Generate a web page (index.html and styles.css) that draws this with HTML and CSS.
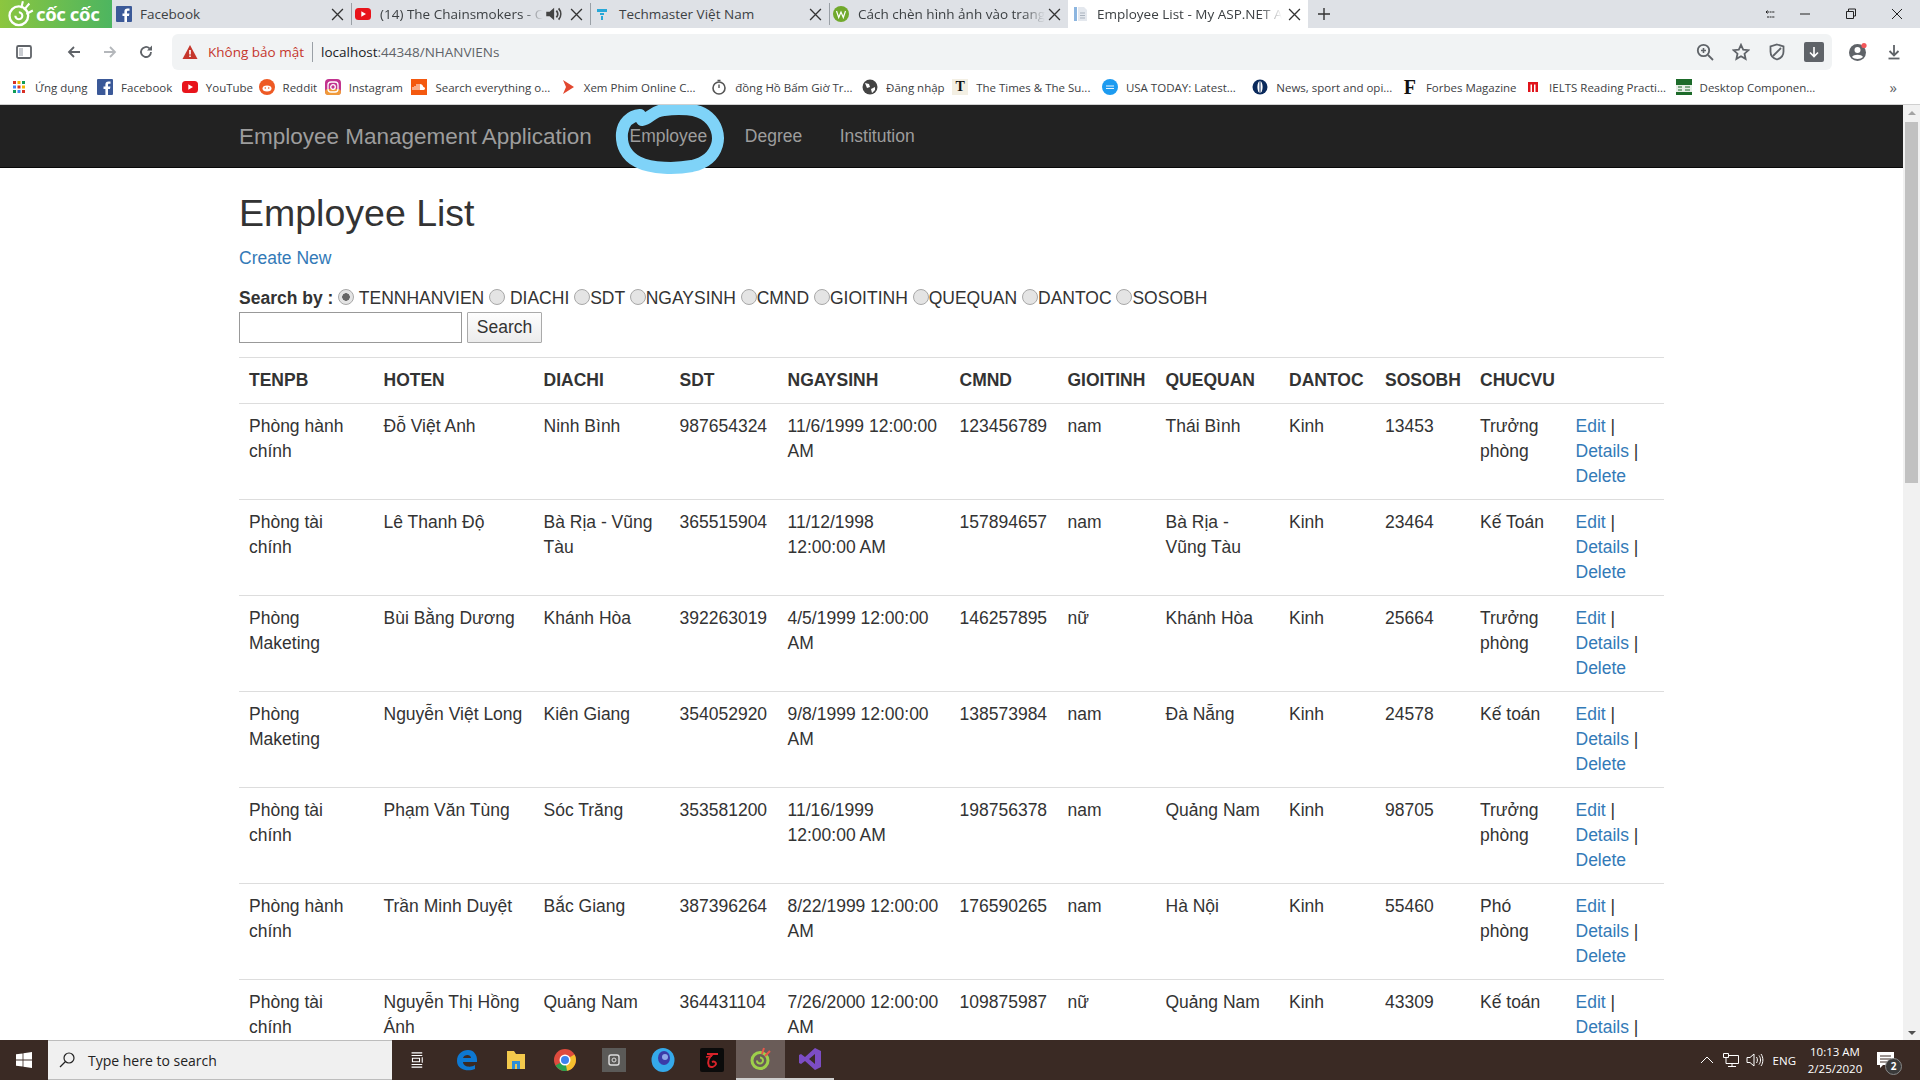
FILE: index.html
```html
<!DOCTYPE html>
<html lang="vi">
<head>
<meta charset="utf-8">
<title>Employee List - My ASP.NET Application</title>
<link rel="stylesheet" href="styles.css">
</head>
<body>
<header class="chrome">
  <div class="tabstrip">
    <div class="brandtab">
      <svg class="cc-logo" viewBox="0 0 24 24"><circle cx="11" cy="13.500" r="8" fill="none" stroke="#fff" stroke-width="2"/><path d="M8 13.500a3 3 0 1 0 6 0c0-2-2-3-3-3" fill="none" stroke="#fff" stroke-width="1.800"/><path d="M14.500 1l-1.500 6M20 3l-4.500 5.500M23 9l-5.500 3" stroke="#fff" stroke-width="1.800"/></svg>
      <span class="cc-text">cốc cốc</span>
    </div>
    <div class="tab">
      <svg class="fav" viewBox="0 0 16 16"><rect width="16" height="16" rx="1" fill="#3b5998"/><path d="M11 16V10h2l.4-2.500H11V6c0-.8.3-1.200 1.200-1.200h1.300V2.500h-2c-2 0-3.100 1.200-3.100 3.200v1.800H6.500V10h1.900v6z" fill="#fff"/></svg>
      <span class="tab-title">Facebook</span>
      <svg class="tab-x" viewBox="0 0 12 12"><path d="M1 1l10 10M11 1L1 11"/></svg>
    </div>
    <div class="tab sep">
      <svg class="fav" viewBox="0 0 16 16"><rect y="2" width="16" height="12" rx="3.500" fill="#e8141b"/><path d="M6.300 5.200v5.600L11 8z" fill="#fff"/></svg>
      <span class="tab-title fade">(14) The Chainsmokers - C</span>
      <svg class="tab-sound" viewBox="0 0 16 16"><path d="M2 6h3l4-3.500v11L5 10H2z" fill="#444"/><path d="M11 5c1.500 1.800 1.500 4.200 0 6M13 3c2.500 3 2.500 7 0 10" fill="none" stroke="#444" stroke-width="1.500"/></svg>
      <svg class="tab-x" viewBox="0 0 12 12"><path d="M1 1l10 10M11 1L1 11"/></svg>
    </div>
    <div class="tab sep">
      <svg class="fav" viewBox="0 0 16 16"><path d="M3 3h10v3H3zM6 7h4v2H6zM7 10h2v4H7z" fill="#28a8d8"/></svg>
      <span class="tab-title">Techmaster Việt Nam</span>
      <svg class="tab-x" viewBox="0 0 12 12"><path d="M1 1l10 10M11 1L1 11"/></svg>
    </div>
    <div class="tab sep">
      <svg class="fav" viewBox="0 0 16 16"><circle cx="8" cy="8" r="8" fill="#71a92c"/><path d="M3.500 5l2.200 6.500L8 6l2.300 5.500L12.500 5" fill="none" stroke="#fff" stroke-width="1.200"/></svg>
      <span class="tab-title fade">Cách chèn hình ảnh vào trang</span>
      <svg class="tab-x" viewBox="0 0 12 12"><path d="M1 1l10 10M11 1L1 11"/></svg>
    </div>
    <div class="tab active">
      <svg class="fav" viewBox="0 0 16 16"><path d="M1 1h3v14H1z" fill="#8db6e0"/><path d="M5 1h6l3 3v11H5z" fill="#e4e8ee"/><path d="M7 7h5M7 9.500h5M7 12h5" stroke="#a9b2bd"/></svg>
      <span class="tab-title fade">Employee List - My ASP.NET A</span>
      <svg class="tab-x" viewBox="0 0 12 12"><path d="M1 1l10 10M11 1L1 11"/></svg>
    </div>
    <svg class="newtab" viewBox="0 0 12 12"><path d="M6 0v12M0 6h12"/></svg>
    <div class="winctl">
      <svg class="wc wc-back" viewBox="0 0 12 12"><path d="M2 4h8M1 4l2-2M1 4l2 2M2 9h8" fill="none" stroke="#222" stroke-width="1" stroke-dasharray="2 .6"/></svg>
      <svg class="wc" viewBox="0 0 12 12"><path d="M1 6h10" stroke="#222" stroke-width="1"/></svg>
      <svg class="wc" viewBox="0 0 12 12"><path d="M3.500 3V1h7v7H8.500M1.500 3.500h7v7h-7z" fill="none" stroke="#222" stroke-width="1"/></svg>
      <svg class="wc" viewBox="0 0 12 12"><path d="M1 1l10 10M11 1L1 11" stroke="#222" stroke-width="1"/></svg>
    </div>
  </div>

  <div class="toolbar">
    <svg class="tb tb-side" viewBox="0 0 16 16"><rect x="1" y="2" width="14" height="12" rx="1.500" fill="none" stroke="#5f6368" stroke-width="1.800"/><rect x="3" y="4" width="4" height="8" fill="#c9ccd1"/></svg>
    <svg class="tb tb-back" viewBox="0 0 16 16"><path d="M14 8H3M8 3L3 8l5 5" fill="none" stroke="#5f6368" stroke-width="1.800"/></svg>
    <svg class="tb tb-fwd" viewBox="0 0 16 16"><path d="M2 8h11M8 3l5 5-5 5" fill="none" stroke="#b4b7bb" stroke-width="1.800"/></svg>
    <svg class="tb tb-reload" viewBox="0 0 16 16"><path d="M13 8a5 5 0 1 1-1.500-3.600" fill="none" stroke="#5f6368" stroke-width="1.800"/><path d="M14 1.500v5h-5z" fill="#5f6368"/></svg>
    <div class="omnibox">
      <svg class="warn" viewBox="0 0 16 16"><path d="M8 1l7.500 14H.5z" fill="#c5362c"/><path d="M7.200 6h1.600v4.500H7.200zM7.200 11.500h1.600v1.600H7.200z" fill="#fff"/></svg>
      <span class="insecure">Không bảo mật</span>
      <span class="omni-sep"></span>
      <span class="url">localhost<span class="url-dim">:44348/NHANVIENs</span></span>
      <svg class="om om-zoom" viewBox="0 0 18 18"><circle cx="7.500" cy="7.500" r="5.700" fill="none" stroke="#5f6368" stroke-width="1.800"/><path d="M12 12l5 5" stroke="#5f6368" stroke-width="1.800"/><path d="M7.500 5v5M5 7.500h5" stroke="#5f6368" stroke-width="1.600"/></svg>
      <svg class="om om-star" viewBox="0 0 18 18"><path d="M9 1.800l2.200 4.800 5.200.6-3.900 3.500 1.100 5.200L9 13.300l-4.600 2.600 1.100-5.200-3.900-3.500 5.200-.6z" fill="none" stroke="#5f6368" stroke-width="1.800"/></svg>
      <svg class="om om-shield" viewBox="0 0 18 18"><path d="M9 1.500l6.500 2v5c0 4-3 7-6.500 8-3.500-1-6.500-4-6.500-8v-5z" fill="none" stroke="#5f6368" stroke-width="1.800"/><path d="M5 13L13 5" stroke="#5f6368" stroke-width="1.800"/></svg>
      <span class="dl-btn"><svg viewBox="0 0 12 12" width="12" height="12"><path d="M6 1v9M2 6.500L6 10.500l4-4" fill="none" stroke="#fff" stroke-width="1.600"/></svg></span>
    </div>
    <svg class="tb tb-user" viewBox="0 0 20 20"><circle cx="9.500" cy="10.500" r="8.500" fill="#5f6368"/><circle cx="9.500" cy="8" r="3" fill="#fff"/><path d="M4 15c1.500-3 9.500-3 11 0-2.500 2.500-8.500 2.500-11 0z" fill="#fff"/><circle cx="16" cy="3.500" r="2.600" fill="#f2575a"/></svg>
    <svg class="tb tb-dl" viewBox="0 0 16 16"><path d="M8 1v10M3.500 7L8 11.500 12.500 7" fill="none" stroke="#5f6368" stroke-width="1.800"/><path d="M2.500 14.500h11" stroke="#5f6368" stroke-width="1.800"/></svg>
  </div>

  <nav class="bookmarks">
    <a class="bm"><svg class="bm-i" viewBox="0 0 16 16"><g fill="#d93025"><rect x="2" y="2" width="3" height="3"/></g><rect x="6.500" y="2" width="3" height="3" fill="#f4b400"/><rect x="11" y="2" width="3" height="3" fill="#0f9d58"/><rect x="2" y="6.500" width="3" height="3" fill="#4285f4"/><rect x="6.500" y="6.500" width="3" height="3" fill="#d93025"/><rect x="11" y="6.500" width="3" height="3" fill="#f4b400"/><rect x="2" y="11" width="3" height="3" fill="#0f9d58"/><rect x="6.500" y="11" width="3" height="3" fill="#4285f4"/><rect x="11" y="11" width="3" height="3" fill="#d93025"/></svg>Ứng dụng</a>
    <a class="bm"><svg class="bm-i" viewBox="0 0 16 16"><rect width="16" height="16" rx="1" fill="#3b5998"/><path d="M11 16V10h2l.4-2.500H11V6c0-.8.3-1.200 1.200-1.200h1.300V2.500h-2c-2 0-3.100 1.200-3.100 3.200v1.800H6.500V10h1.900v6z" fill="#fff"/></svg>Facebook</a>
    <a class="bm"><svg class="bm-i" viewBox="0 0 16 16"><rect y="2" width="16" height="12" rx="3.500" fill="#e8141b"/><path d="M6.300 5.200v5.600L11 8z" fill="#fff"/></svg>YouTube</a>
    <a class="bm"><svg class="bm-i" viewBox="0 0 16 16"><circle cx="8" cy="8" r="8" fill="#ee5a24"/><ellipse cx="8" cy="9.500" rx="4.500" ry="3" fill="#fff"/><circle cx="6.300" cy="9" r=".8" fill="#ee5a24"/><circle cx="9.700" cy="9" r=".8" fill="#ee5a24"/></svg>Reddit</a>
    <a class="bm"><svg class="bm-i" viewBox="0 0 16 16"><rect width="16" height="16" rx="4" fill="#c2338f"/><rect x="0" y="10" width="16" height="6" rx="3" fill="#f09a3a"/><rect x="3" y="3" width="10" height="10" rx="3" fill="none" stroke="#fff" stroke-width="1.300"/><circle cx="8" cy="8" r="2.300" fill="none" stroke="#fff" stroke-width="1.300"/></svg>Instagram</a>
    <a class="bm"><svg class="bm-i" viewBox="0 0 16 16"><rect width="16" height="16" fill="#f4590f"/><path d="M2 11V8M4 11V7M6 11V5M8 11V5" stroke="#fff"/><path d="M9 5c3 0 3 3 3.500 3 2 0 2 3 0 3H9z" fill="#fff"/></svg>Search everything o...</a>
    <a class="bm"><svg class="bm-i" viewBox="0 0 16 16"><path d="M3 1l11 7-11 7 3-7z" fill="#e2472f"/></svg>Xem Phim Online C...</a>
    <a class="bm"><svg class="bm-i" viewBox="0 0 16 16"><circle cx="8" cy="9" r="6" fill="#fff" stroke="#555" stroke-width="1.600"/><path d="M8 9V5.500M6.500 1.500h3" stroke="#555" stroke-width="1.400"/></svg>đồng Hồ Bấm Giờ Tr...</a>
    <a class="bm"><svg class="bm-i" viewBox="0 0 16 16"><circle cx="8" cy="8" r="7.500" fill="#444"/><path d="M3 4l4 1 1 3-3 1zM9 10l4-2 0 3-3 3z" fill="#fff"/></svg>Đăng nhập</a>
    <a class="bm"><span class="bm-i bm-t">T</span>The Times &amp; The Su...</a>
    <a class="bm"><svg class="bm-i" viewBox="0 0 16 16"><circle cx="8" cy="8" r="8" fill="#1d9bf0"/><path d="M4 7h8M4 9.500h8" stroke="#fff" stroke-width=".9"/></svg>USA TODAY: Latest...</a>
    <a class="bm"><svg class="bm-i" viewBox="0 0 16 16"><circle cx="8" cy="8" r="7.500" fill="#0a2a5c"/><ellipse cx="8" cy="8" rx="2.600" ry="6" fill="#fff"/><path d="M8 2v12" stroke="#0a2a5c"/></svg>News, sport and opi...</a>
    <a class="bm"><span class="bm-i bm-f">F</span>Forbes Magazine</a>
    <a class="bm"><svg class="bm-i" viewBox="0 0 16 16"><path d="M3 3h10v10h-2.500V5.500H9V13H7V5.500H5.500V13H3z" fill="#e0141b"/></svg>IELTS Reading Practi...</a>
    <a class="bm"><svg class="bm-i" viewBox="0 0 16 16"><rect width="16" height="16" fill="#1d6b2a"/><rect y="6" width="16" height="7" fill="#e8efe8"/><path d="M2 8h4M9 8h5M2 11h4M9 11h5" stroke="#1d6b2a"/></svg>Desktop Componen...</a>
    <span class="bm-more">»</span>
  </nav>
</header>

<div class="viewport">
  <div class="page">
    <div class="navbar">
      <div class="container nav-inner">
        <a class="nav-brand">Employee Management Application</a>
        <a class="nav-link">Employee</a>
        <a class="nav-link">Degree</a>
        <a class="nav-link">Institution</a>
      </div>
    </div>
    <svg class="scribble" viewBox="0 0 112 74"><path d="M28 17C36 16 38 8 50 7C64 5 84 5 94 14C102 21 106 32 103 42C100 52 92 60 78 63C62 66 38 66 24 59C12 53 7 42 8 30C9 20 16 13 26 12" fill="none" stroke="#7fd3f8" stroke-width="12" stroke-linejoin="round" stroke-linecap="round"/></svg>

    <main class="container">
      <h2 class="title">Employee List</h2>
      <p class="create"><a class="link">Create New</a></p>
      <form class="search">
        <div class="search-by"><b>Search by :</b> <input class="radio" type="radio" name="f" checked> TENNHANVIEN <input class="radio" type="radio" name="f"> DIACHI <input class="radio" type="radio" name="f">SDT <input class="radio" type="radio" name="f">NGAYSINH <input class="radio" type="radio" name="f">CMND <input class="radio" type="radio" name="f">GIOITINH <input class="radio" type="radio" name="f">QUEQUAN <input class="radio" type="radio" name="f">DANTOC <input class="radio" type="radio" name="f">SOSOBH</div>
        <div class="search-box"><input class="text" type="text"> <button class="btn" type="button">Search</button></div>
      </form>
      <table class="grid">
        <colgroup><col class="c1"><col class="c2"><col class="c3"><col class="c4"><col class="c5"><col class="c6"><col class="c7"><col class="c8"><col class="c9"><col class="c10"><col class="c11"><col class="c12"></colgroup>
        <thead><tr><th>TENPB</th><th>HOTEN</th><th>DIACHI</th><th>SDT</th><th>NGAYSINH</th><th>CMND</th><th>GIOITINH</th><th>QUEQUAN</th><th>DANTOC</th><th>SOSOBH</th><th>CHUCVU</th><th></th></tr></thead>
        <tbody>
          <tr><td>Phòng hành chính</td><td>Đỗ Việt Anh</td><td>Ninh Bình</td><td>987654324</td><td>11/6/1999 12:00:00 AM</td><td>123456789</td><td>nam</td><td>Thái Bình</td><td>Kinh</td><td>13453</td><td>Trưởng phòng</td><td><a class="link">Edit</a> | <a class="link">Details</a> | <a class="link">Delete</a></td></tr>
          <tr><td>Phòng tài chính</td><td>Lê Thanh Độ</td><td>Bà Rịa - Vũng Tàu</td><td>365515904</td><td>11/12/1998 12:00:00 AM</td><td>157894657</td><td>nam</td><td>Bà Rịa - Vũng Tàu</td><td>Kinh</td><td>23464</td><td>Kế Toán</td><td><a class="link">Edit</a> | <a class="link">Details</a> | <a class="link">Delete</a></td></tr>
          <tr><td>Phòng Maketing</td><td>Bùi Bằng Dương</td><td>Khánh Hòa</td><td>392263019</td><td>4/5/1999 12:00:00 AM</td><td>146257895</td><td>nữ</td><td>Khánh Hòa</td><td>Kinh</td><td>25664</td><td>Trưởng phòng</td><td><a class="link">Edit</a> | <a class="link">Details</a> | <a class="link">Delete</a></td></tr>
          <tr><td>Phòng Maketing</td><td>Nguyễn Việt Long</td><td>Kiên Giang</td><td>354052920</td><td>9/8/1999 12:00:00 AM</td><td>138573984</td><td>nam</td><td>Đà Nẵng</td><td>Kinh</td><td>24578</td><td>Kế toán</td><td><a class="link">Edit</a> | <a class="link">Details</a> | <a class="link">Delete</a></td></tr>
          <tr><td>Phòng tài chính</td><td>Phạm Văn Tùng</td><td>Sóc Trăng</td><td>353581200</td><td>11/16/1999 12:00:00 AM</td><td>198756378</td><td>nam</td><td>Quảng Nam</td><td>Kinh</td><td>98705</td><td>Trưởng phòng</td><td><a class="link">Edit</a> | <a class="link">Details</a> | <a class="link">Delete</a></td></tr>
          <tr><td>Phòng hành chính</td><td>Trần Minh Duyệt</td><td>Bắc Giang</td><td>387396264</td><td>8/22/1999 12:00:00 AM</td><td>176590265</td><td>nam</td><td>Hà Nội</td><td>Kinh</td><td>55460</td><td>Phó phòng</td><td><a class="link">Edit</a> | <a class="link">Details</a> | <a class="link">Delete</a></td></tr>
          <tr><td>Phòng tài chính</td><td>Nguyễn Thị Hồng Ánh</td><td>Quảng Nam</td><td>364431104</td><td>7/26/2000 12:00:00 AM</td><td>109875987</td><td>nữ</td><td>Quảng Nam</td><td>Kinh</td><td>43309</td><td>Kế toán</td><td><a class="link">Edit</a> | <a class="link">Details</a> |</td></tr>
        </tbody>
      </table>
    </main>
  </div>
  <div class="scrollbar">
    <span class="sb-up"></span>
    <span class="sb-thumb"></span>
    <span class="sb-down"></span>
  </div>
</div>

<footer class="taskbar">
  <svg class="win" viewBox="0 0 16 16"><path d="M0 2.300l6.600-.9v6.200H0zM7.400 1.300L16 0v7.600H7.400zM0 8.400h6.600v6.200L0 13.700zM7.400 8.400H16V16l-8.600-1.200z" fill="#fff"/></svg>
  <div class="tsearch">
    <svg class="tsearch-i" viewBox="0 0 16 16"><circle cx="10" cy="6" r="5" fill="none" stroke="#222" stroke-width="1.200"/><path d="M6.500 9.500L1 15" stroke="#222" stroke-width="1.300"/></svg>
    <span>Type here to search</span>
  </div>
  <div class="tapps">
    <span class="tapp tapp-view"><svg viewBox="0 0 18 18" width="16" height="18"><path d="M4 1h12M4 4h12M4 14h12M4 17h12M5 7h8v4H5zM16 6v6" fill="none" stroke="#fff" stroke-width="1.200"/></svg></span>
    <span class="tapp"><svg viewBox="0 0 22 22" width="22" height="22"><path d="M1 12C1 5 6 1 12 1c6 0 9 5 9 10v2H7c0 5 8 6 12 3v4c-7 3-18 1-18-8zm6-3h8c0-4-7-4-8 0z" fill="#0d78d2"/></svg></span>
    <span class="tapp"><svg viewBox="0 0 22 22" width="22" height="22"><path d="M2 2h7l2 3h9v15H2z" fill="#f3c94c"/><rect x="7" y="12" width="8" height="8" fill="#2f8fd8"/><rect x="10" y="15" width="2" height="5" fill="#f3c94c"/></svg></span>
    <span class="tapp"><svg viewBox="0 0 24 24" width="24" height="24"><circle cx="12" cy="12" r="11" fill="#de4b3e"/><path d="M12 12L2.500 17.500A11 11 0 0 0 16 22.300z" fill="#2ba14f"/><path d="M12 12l9.500-5.500A11 11 0 0 1 14 22.800z" fill="#f6c02e"/><circle cx="12" cy="12" r="5.500" fill="#fff"/><circle cx="12" cy="12" r="4" fill="#3d83ef"/></svg></span>
    <span class="tapp"><svg viewBox="0 0 24 24" width="24" height="24"><rect width="24" height="24" fill="#5b5a58"/><rect x="7" y="7" width="10" height="10" rx="2" fill="none" stroke="#ddd" stroke-width="1.400"/><circle cx="12" cy="12" r="2" fill="none" stroke="#ddd"/></svg></span>
    <span class="tapp"><svg viewBox="0 0 24 24" width="24" height="24"><ellipse cx="12" cy="12" rx="11.500" ry="12" fill="#35a9ea"/><ellipse cx="13" cy="10" rx="6" ry="7" fill="#3b3ba8"/><circle cx="14" cy="9" r="3" fill="#8fa8e8"/></svg></span>
    <span class="tapp"><svg viewBox="0 0 24 24" width="24" height="24"><rect width="24" height="24" rx="2" fill="#0b0b0b"/><path d="M7 6h11M13 6c-4 3-6 7-4 12 2 2 6 1 7-2 0-2-2-3-4-2" fill="none" stroke="#d8232a" stroke-width="2"/><path d="M6 9l6-1" stroke="#d8232a" stroke-width="1.500"/></svg></span>
    <span class="tapp tapp-on"><svg viewBox="0 0 24 24" width="24" height="24"><circle cx="11" cy="13.500" r="8" fill="none" stroke="#9ed04b" stroke-width="3"/><path d="M8 13.500a3 3 0 1 0 6 0c0-2-2-3-3-3" fill="none" stroke="#9ed04b" stroke-width="2"/><path d="M15 1l-2 6M21 4l-5 5" stroke="#e8574a" stroke-width="2"/></svg></span>
    <span class="tapp tapp-open"><svg viewBox="0 0 24 24" width="24" height="24"><path d="M17 1l6 3v16l-6 3L7 14l-4 3-2-1V8l2-1 4 3zM17 7l-6 5 6 5z" fill="#7c4dc4"/></svg></span>
  </div>
  <div class="tray">
    <svg class="tr-i tr-up" viewBox="0 0 14 14" width="14" height="14"><path d="M1 10l6-6 6 6" fill="none" stroke="#fff"/></svg>
    <svg class="tr-i tr-net" viewBox="0 0 18 16" width="18" height="16"><path d="M1.500 1.500h5v4h-5zM6.500 3.500h10v8h-10M10 11.500v3M6 14.500h8M4 5.500v6h3" fill="none" stroke="#fff"/></svg>
    <svg class="tr-i tr-vol" viewBox="0 0 18 16" width="18" height="16"><path d="M1 5.500h3L8 2v12L4 10.500H1zM10.500 5c1.200 1.800 1.200 4.200 0 6M13 3.500c2 2.700 2 6.300 0 9M15 2c2.500 3.500 2.500 8.500 0 12" fill="none" stroke="#fff"/></svg>
    <span class="tr-lang">ENG</span>
    <div class="clock"><span>10:13 AM</span><span>2/25/2020</span></div>
    <span class="notif">
      <svg viewBox="0 0 18 16" width="18" height="16"><path d="M0 0h17v13H6l-3 3v-3H0z" fill="#fff"/><path d="M3 4h11M3 7h11M3 10h7" stroke="#3a2a24"/></svg>
      <span class="notif-n">2</span>
    </span>
  </div>
</footer>
</body>
</html>
```

FILE: styles.css
```css
* { box-sizing: border-box; }
html, body { margin: 0; height: 100%; }
body {
  display: flex;
  flex-direction: column;
  height: 100vh;
  overflow: hidden;
  font-family: "Liberation Sans", Arial, sans-serif;
  font-size: 17.5px;
  line-height: 25px;
  color: #333;
  background: #fff;
}

/* browser chrome */
.chrome { flex: none; font-family: "Open Sans", "Noto Sans", sans-serif; }
.tabstrip {
  display: flex;
  align-items: center;
  height: 28px;
  background: #dee1e6;
  font-size: 13.5px;
  color: #3c4043;
}
.brandtab {
  display: flex;
  align-items: center;
  gap: 2px;
  width: 112px;
  height: 100%;
  padding-left: 6px;
  overflow: hidden;
  background: linear-gradient(90deg, #8cc63f, #4db560);
  color: #fff;
}
.cc-logo { flex: none; width: 28px; height: 28px; }
.cc-text { font: 700 18.5px/1 "Noto Sans", sans-serif; letter-spacing: -.4px; white-space: nowrap; }
.tab {
  position: relative;
  display: flex;
  align-items: center;
  width: 239px;
  height: 100%;
  padding: 0 7px 0 4px;
}
.tab.sep { padding-left: 3px; border-left: 1px solid #9aa0a6; height: 22px; }
.tab.sep .fav { margin-right: 9px; }
.tab.active { background: #fff; width: 240px; padding-left: 5px; }
.fav { flex: none; width: 16px; height: 16px; margin-right: 8px; }
.tab-title { white-space: nowrap; color: #3c4043; }
.tab-title.fade {
  -webkit-mask-image: linear-gradient(90deg, #000 88%, transparent);
  mask-image: linear-gradient(90deg, #000 88%, transparent);
}
.tab-sound { flex: none; width: 18px; height: 18px; margin: 0 8px 0 auto; }
.tab-x { flex: none; width: 13px; height: 13px; fill: none; stroke: #333; stroke-width: 1.2; margin-left: auto; }
.tab-sound + .tab-x { margin-left: 0; }
.newtab { flex: none; width: 12px; height: 12px; margin-left: 10px; fill: none; stroke: #333; stroke-width: 1.400; }
.winctl { display: flex; align-items: center; gap: 34px; margin-left: auto; padding-right: 17px; }
.wc { width: 12px; height: 12px; }
.wc-back { margin-right: -12px; }

.toolbar {
  display: flex;
  align-items: center;
  height: 44px;
  padding: 4px 0 0 16px;
  background: #fff;
}
.tb { flex: none; width: 16px; height: 16px; }
.tb-back { margin-left: 34px; }
.tb-fwd { margin-left: 20px; }
.tb-reload { margin-left: 20px; }
.omnibox {
  display: flex;
  align-items: center;
  flex: 1;
  min-width: 0;
  height: 36px;
  margin-left: 18px;
  padding: 0 8px 0 10px;
  background: #f1f3f4;
  border-radius: 6px;
  font-size: 13.5px;
}
.warn { flex: none; width: 16px; height: 16px; margin-right: 10px; }
.insecure { color: #c5362c; white-space: nowrap; }
.omni-sep { width: 1px; height: 20px; margin: 0 8px; background: #9aa0a6; }
.url { color: #202124; flex: 1; }
.url-dim { color: #5f6368; }
.om { flex: none; width: 18px; height: 18px; margin-right: 18px; }
.dl-btn {
  display: flex;
  align-items: center;
  justify-content: center;
  width: 20px;
  height: 20px;
  background: #5f6368;
  border-radius: 2px;
}
.tb-user { width: 20px; height: 20px; margin-left: 16px; }
.tb-dl { width: 16px; height: 16px; margin: 0 18px 0 18px; }

.bookmarks {
  display: flex;
  align-items: center;
  gap: 9.5px;
  height: 33px;
  padding: 0 0 2px 11px;
  background: #fff;
  border-bottom: 1px solid #d0d0d0;
  font-size: 11.5px;
  color: #3c4043;
  white-space: nowrap;
}
.bm { display: flex; align-items: center; gap: 8px; }
.bm:nth-child(4) { margin-left: -4px; }
.bm:nth-child(5) { margin-left: -2px; }
.bm:nth-child(6) { margin-left: -1px; }
.bm:nth-child(8) { margin-left: 6px; }
.bm:nth-child(10) { margin-left: -2px; }
.bm:nth-child(11) { margin-left: 2px; }
.bm:nth-child(12) { margin-left: 7px; }
.bm:nth-child(14) { margin-left: -1px; }
.bm-i { flex: none; width: 16px; height: 16px; }
.bm-t { background: #f3efe3; color: #111; font: 700 14px/16px "Liberation Serif", serif; text-align: center; }
.bm-f { color: #111; font: 700 20px/16px "Liberation Serif", serif; text-align: center; }
.bm-more { margin-left: auto; padding-right: 23px; font-size: 15px; color: #5f6368; }

/* page area */
.viewport { flex: 1; min-height: 0; display: flex; }
.page { position: relative; flex: 1; min-width: 0; overflow: hidden; }
.scrollbar {
  flex: none;
  display: flex;
  flex-direction: column;
  align-items: center;
  width: 17px;
  background: #f1f1f1;
}
.sb-up, .sb-down { flex: none; width: 0; height: 0; margin: 6px 0 5px; border-left: 4px solid transparent; border-right: 4px solid transparent; }
.sb-up { border-bottom: 4px solid #a3a3a3; }
.sb-down { margin-top: auto; border-top: 4px solid #505050; }
.sb-thumb { flex: none; width: 13px; height: 361px; margin-top: 2px; background: #c1c1c1; }

.container { width: 1455px; margin-left: 224px; padding: 0 15px; }
.navbar { height: 63px; background: #222; border-bottom: 1px solid #080808; }
.nav-inner { display: flex; align-items: center; height: 62px; }
.nav-brand { font-size: 22.5px; color: #9d9d9d; padding-right: 19px; }
.nav-link { color: #9d9d9d; padding: 0 18.750px; }
.scribble { position: absolute; left: 614px; top: -2px; width: 112px; height: 74px; overflow: visible; }

.title { margin: 25px 0 12px; font-size: 37.5px; line-height: 41px; font-weight: 500; }
.create { margin: 0 0 13px; }
.link { color: #337ab7; }
.search { margin: 0 0 14px; }
.search-by { height: 28px; padding-top: 2px; white-space: nowrap; }
.radio {
  appearance: none;
  width: 16px;
  height: 16px;
  margin: 0;
  border: 1px solid #a8a8a8;
  border-radius: 50%;
  background: #e4e4e4;
  vertical-align: -1px;
}
.radio:checked { background: radial-gradient(circle, #666 0 3.500px, #e4e4e4 4px); }
.search-box { display: flex; gap: 5px; height: 31px; }
.text { width: 223px; height: 31px; padding: 0 4px; border: 1px solid #999; background: #fff; }
.btn {
  width: 75px;
  height: 31px;
  padding: 0;
  border: 1px solid #aaa;
  border-radius: 1px;
  background: linear-gradient(#fdfdfd, #ececec);
  color: #333;
  font: 17.5px "Liberation Sans", Arial, sans-serif;
}

.grid { width: 1425px; table-layout: fixed; border-collapse: collapse; }
.c1 { width: 134.500px; }
.c2 { width: 160px; }
.c3 { width: 136px; }
.c4 { width: 108px; }
.c5 { width: 172px; }
.c6 { width: 108px; }
.c7 { width: 98px; }
.c8 { width: 123.500px; }
.c9 { width: 96px; }
.c10 { width: 95px; }
.c11 { width: 95.500px; }
.grid th, .grid td { padding: 10px; text-align: left; vertical-align: top; border-top: 1px solid #ddd; }
.grid th { font-weight: 700; border-bottom: 1px solid #ddd; }
.grid tbody tr:first-child td { border-top: 0; }

/* taskbar */
.taskbar {
  flex: none;
  display: flex;
  align-items: center;
  height: 40px;
  background: #3a2a24;
  font-family: "Open Sans", "Noto Sans", sans-serif;
  color: #fff;
}
.win { flex: none; width: 16px; height: 16px; margin: 0 16px; }
.tsearch {
  flex: none;
  display: flex;
  align-items: center;
  gap: 13px;
  width: 344px;
  height: 40px;
  padding-left: 11px;
  background: #f0f0f0;
  border: 1px solid #bdbdbd;
  border-width: 1px 0;
  color: #222;
  font-size: 14px;
}
.tsearch-i { width: 16px; height: 16px; }
.tapps { display: flex; align-items: center; margin-left: 1px; }
.tapp {
  display: flex;
  align-items: center;
  justify-content: center;
  width: 49px;
  height: 40px;
}
.tapp-view { padding-right: 4px; }
.tapp-on { background: #6a5c58; border-bottom: 2px solid #cfcfcf; }
.tapp-open { position: relative; border-bottom: 2px solid #cfcfcf; }
.tray { display: flex; align-items: center; margin-left: auto; padding-right: 25px; }
.tr-i { flex: none; }
.tr-net { margin-left: 8px; }
.tr-vol { margin-left: 6px; }
.tr-lang { margin-left: 9px; font-size: 11.5px; }
.clock {
  display: flex;
  flex-direction: column;
  align-items: center;
  width: 64px;
  margin-left: 7px;
  font-size: 11.5px;
  line-height: 17px;
}
.notif { position: relative; display: flex; margin-left: 10px; }
.notif-n {
  position: absolute;
  right: -7px;
  bottom: -7px;
  width: 17px;
  height: 17px;
  border-radius: 50%;
  background: #3a3a3a;
  border: 1.500px solid #888;
  font-size: 10px;
  font-weight: 700;
  line-height: 14px;
  text-align: center;
}
```
